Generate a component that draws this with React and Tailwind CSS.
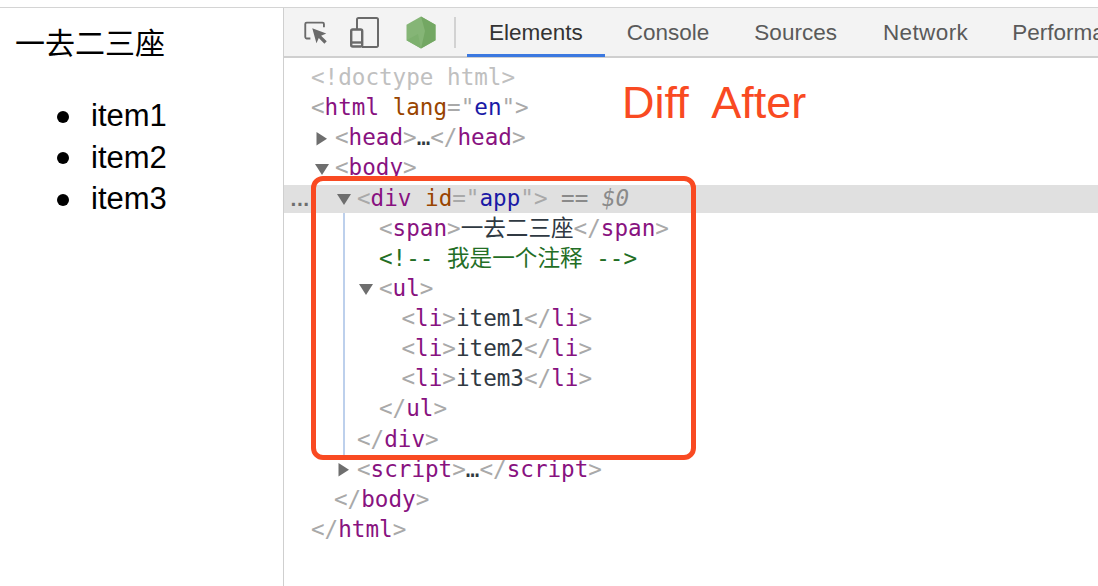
import React from "react";

const B = ({ children }) => <span className="text-[#a9a9a9]">{children}</span>;
const T = ({ children }) => <span className="text-[#881280]">{children}</span>;
const Open = ({ n }) => (<><B>&lt;</B><T>{n}</T><B>&gt;</B></>);
const Close = ({ n }) => (<><B>&lt;/</B><T>{n}</T><B>&gt;</B></>);
const X = ({ children }) => <span className="text-[#303942]">{children}</span>;

const Arrow = ({ open }) => (
  <span className="inline-block w-[20px] -ml-[20px] align-middle">
    <svg width="14" height="14" viewBox="0 0 14 14" className="block">
      {open ? <path d="M0 2h14L7 13z" fill="#6e6e6e" /> : <path d="M1.500 0v13.500L12 6.700z" fill="#6e6e6e" />}
    </svg>
  </span>
);

const Line = ({ className, children }) => (
  <div className={"h-[30.13px] leading-[30px] whitespace-nowrap " + className}>{children}</div>
);

const Tab = ({ children, active, className = "" }) => (
  <div className={"h-full px-[22px] flex items-center shrink-0 text-[22.5px] border-b-[3px] pt-[1px] " + (active ? "border-[#3b78e0] text-[#333] " : "border-transparent text-[#5a5a5a] ") + className}>
    {children}
  </div>
);

const Item = ({ children }) => (
  <li className="flex items-center gap-[22px]">
    <span className="w-[12px] h-[12px] rounded-full bg-black shrink-0 mt-[2px]" />
    {children}
  </li>
);

export default function App() {
  return (
    <div className="w-[1098px] h-[586px] overflow-hidden bg-white pt-[7px] font-['Liberation_Sans',sans-serif]">
      <div className="h-full flex border-t-[1px] border-[#d4d4d4]">
        <aside className="w-[284px] shrink-0 border-r border-[#cfcfcf] text-black">
          <div className="pl-[15px] pt-[16px] text-[30px] leading-[40px] font-['Liberation_Sans','Noto_Sans_CJK_SC',sans-serif]">一去二三座</div>
          <ul className="pl-[57px] mt-[31px] text-[31px] leading-[41.5px]">
            <Item>item1</Item>
            <Item>item2</Item>
            <Item>item3</Item>
          </ul>
        </aside>

        <main className="relative flex-1 min-w-0 overflow-hidden">
          <div className="h-[50px] bg-[#f3f3f3] border-b-[2px] border-[#cfcfcf] flex items-center">
            <div className="w-[183px] shrink-0 flex items-center relative h-full">
              <svg width="28" height="28" viewBox="0 0 30 30" className="ml-[18px] shrink-0">
                <path d="M9 22H5a2 2 0 0 1-1.500-1.500V6.500A1.500 1.500 0 0 1 5 5h17a1.500 1.500 0 0 1 1.500 1.500V10" fill="none" stroke="#6a6a6a" strokeWidth="2" />
                <path d="M11 11l15 5.500-5.500 2.500 6 6-2.500 2.500-6-6-2.500 5.500z" fill="#6a6a6a" />
              </svg>
              <svg width="30" height="32" viewBox="0 0 30 32" className="ml-[20px] shrink-0">
                <path d="M8 13V3.500A1.500 1.500 0 0 1 9.500 2h18A1.500 1.500 0 0 1 29 3.500v26a1.500 1.500 0 0 1-1.500 1.500H13" fill="none" stroke="#6a6a6a" strokeWidth="2" transform="translate(-1 0)" />
                <rect x="1.200" y="13.500" width="11" height="17" rx="1.500" fill="none" stroke="#6a6a6a" strokeWidth="2.400" />
                <path d="M1 26.500h11" stroke="#6a6a6a" strokeWidth="2.400" />
              </svg>
              <svg width="30" height="33" viewBox="0 0 30 33" className="ml-[26px] shrink-0">
                <path d="M15 .500L29.500 8.700v15.600L15 32.500.5 24.300V8.700z" fill="#85b576" />
                <path d="M15 .500L29.500 8.700v15.600L15 32.500 19 15z" fill="#73a763" />
                <path d="M15 32.500L.5 24.300 12 18z" fill="#7db06e" />
              </svg>
              <div className="absolute left-[170px] top-[9px] w-[2px] h-[31px] bg-[#d2d2d2]" />
            </div>
            <div className="flex h-full -mb-[2px] pt-[1px]">
              <Tab active>Elements</Tab>
              <Tab>Console</Tab>
              <Tab className="ml-[1px]">Sources</Tab>
              <Tab className="ml-[2px] tracking-[0.4px]">Network</Tab>
              <Tab>Performance</Tab>
            </div>
          </div>

          <div className="pt-[4px] text-[22.6px] font-['DejaVu_Sans_Mono','Noto_Sans_CJK_SC',monospace]">
            <Line className="pl-[27px] text-[#c0c0c0]">&lt;!doctype html&gt;</Line>
            <Line className="pl-[27px]"><B>&lt;</B><T>html</T> <span className="text-[#994500]">lang</span><B>=</B><B>"</B><span className="text-[#1a1aa6]">en</span><B>"&gt;</B></Line>
            <Line className="pl-[51px]"><Arrow /><Open n="head" /><X>…</X><Close n="head" /></Line>
            <Line className="pl-[51px]"><Arrow open /><Open n="body" /></Line>
            <div className="relative h-[30.13px] leading-[30px] whitespace-nowrap pl-[73px]">
              <div className="absolute inset-x-0 top-[2px] bottom-0 bg-[#e0e0e0]" />
              <span className="absolute left-[4px] top-[2px] text-[#6e6e6e] text-[18px] tracking-[-4.400px] font-bold">...</span>
              <span className="relative">
                <Arrow open /><B>&lt;</B><T>div</T> <span className="text-[#994500]">id</span><B>=</B><B>"</B><span className="text-[#1a1aa6]">app</span><B>"&gt;</B> <span className="text-[#8a8a8a]">==</span> <span className="text-[#8a8a8a] italic">$0</span>
              </span>
            </div>
            <Line className="pl-[95px]"><Open n="span" /><X>一去二三座</X><Close n="span" /></Line>
            <Line className="pl-[95px] text-[#236e25]">&lt;!-- 我是一个注释 --&gt;</Line>
            <Line className="pl-[95px]"><Arrow open /><Open n="ul" /></Line>
            <Line className="pl-[117.5px]"><Open n="li" /><X>item1</X><Close n="li" /></Line>
            <Line className="pl-[117.5px]"><Open n="li" /><X>item2</X><Close n="li" /></Line>
            <Line className="pl-[117.5px]"><Open n="li" /><X>item3</X><Close n="li" /></Line>
            <Line className="pl-[95px]"><Close n="ul" /></Line>
            <Line className="pl-[73px]"><Close n="div" /></Line>
            <Line className="pl-[73px]"><Arrow /><Open n="script" /><X>…</X><Close n="script" /></Line>
            <Line className="pl-[50px]"><Close n="body" /></Line>
            <Line className="pl-[27px]"><Close n="html" /></Line>
          </div>

          <div className="absolute left-[59px] top-[205px] w-[2px] h-[242px] bg-[#bdd0ec]" />
          <div className="absolute left-[27px] top-[168px] w-[385px] h-[284px] border-[5px] border-[#f94a22] rounded-[12px]" />
          <div className="absolute left-[338px] top-[70px] text-[45px] leading-[50px] text-[#f94a22] whitespace-pre">Diff  After</div>
        </main>
      </div>
    </div>
  );
}
